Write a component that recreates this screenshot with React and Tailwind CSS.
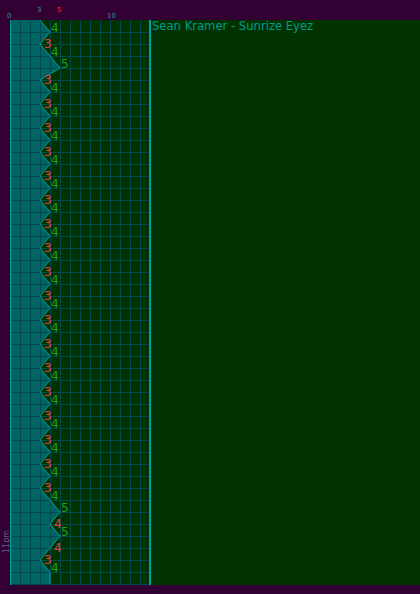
import React from "react";

// sleep depth per 12px row, k = 0..47
const levels = [3, 4, 3, 4, 5];
for (let k = 5; k <= 39; k++) levels.push(k % 2 === 1 ? 3 : 4);
levels.push(4, 5, 4, 5, 4, 3, 4, 4);

const ROW = 12;
const TOP = 20;
const px = (v) => 10 + v * 10;
const py = (k) => TOP + k * ROW;

function Axis() {
    return (
        <svg width="150" height="20" viewBox="0 0 150 20" className="block" style={{ fontFamily: "'DejaVu Sans', sans-serif" }}>
            <text x="7" y="18" fontSize="7" fill="#2f8f9f">0</text>
            <text x="37" y="12" fontSize="7" fill="#2f9f9f">3</text>
            <text x="57" y="12" fontSize="7" fill="#ff3333">5</text>
            <text x="107" y="18" fontSize="7" fill="#2f8f9f">10</text>
        </svg>
    );
}

function Chart() {
    const pts = levels.map((v, k) => `${px(v)},${py(k)}`);
    const poly = [`10,${TOP}`, ...pts, `10,${py(47)}`].join(" ");
    const edge = pts.join(" ");

    const cols = [];
    for (let x = 20; x <= 140; x += 10) cols.push(x);
    const rows = [];
    for (let k = 1; k <= 47; k++) rows.push(py(k));

    return (
        <svg width="149" height="565" viewBox="0 20 149 565" className="block shrink-0" style={{ fontFamily: "'DejaVu Sans', sans-serif" }} shapeRendering="crispEdges">
            <rect x="10" y="20" width="139" height="565" fill="#003300" />
            <polygon points={poly} fill="#006464" />
            <line x1="60.5" y1="20" x2="60.5" y2="585" stroke="#ff2a2a" strokeWidth="1" />
            {cols.map((x) => (
                <line key={"c" + x} x1={x + 0.5} y1="20" x2={x + 0.5} y2="585" stroke="#004a4f" />
            ))}
            {rows.map((y) => (
                <line key={"r" + y} x1="10" y1={y + 0.5} x2="149" y2={y + 0.5} stroke="#004a4f" />
            ))}
            <line x1="10.5" y1="20" x2="10.5" y2="585" stroke="#00a0a0" />
            <polyline points={edge} fill="none" stroke="#00a0a0" strokeWidth="1" shapeRendering="auto" />
            {levels.map((v, k) => {
                if (k === 0 || k === 47) return null;
                const up = v > levels[k - 1];
                return up ? (
                    <text key={k} x={px(v) + 1} y={py(k)} fontSize="12" fill="#1f9f1f">{v}</text>
                ) : (
                    <text key={k} x={px(v) + 4} y={py(k) + 4} fontSize="12" fill="#f03c30">{v}</text>
                );
            })}
            <text x="0" y="0" fontSize="8" fill="#665588" transform="translate(9 553) rotate(-90)">11pm</text>
        </svg>
    );
}

export default function App() {
    return (
        <div className="w-[420px] h-[594px] bg-[#330033] flex flex-col overflow-hidden">
            <div className="h-[20px] shrink-0">
                <Axis />
            </div>
            <div className="flex h-[565px]">
                <Chart />
                <div className="flex-1 bg-[#003300] border-l-2 border-[#00a0a0] pl-[1px]">
                    <p className="text-[11.6px] leading-[13px] text-[#009a90]" style={{ fontFamily: "'DejaVu Sans', sans-serif" }}>
                        Sean Kramer - Sunrize Eyez
                    </p>
                </div>
            </div>
        </div>
    );
}
